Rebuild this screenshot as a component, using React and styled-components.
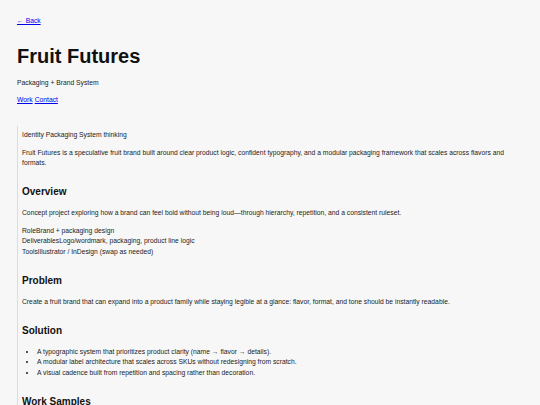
import React from 'react';
import styled, { createGlobalStyle } from 'styled-components';

const Global = createGlobalStyle`
  html, body {
    margin: 0;
    background: #f7f7f7;
  }
  body {
    font-family: "Liberation Sans", Arial, sans-serif;
    color: #1c1c1c;
    font-size: 6.75px;
    line-height: 10.5px;
  }
`;

const Page = styled.div`
  padding: 16px 17px 0;
`;

const NavLink = styled.a`
  color: #0000ee;
  text-decoration: underline;
`;

const Header = styled.header`
  display: flex;
  flex-direction: column;
`;

const Title = styled.h1`
  font-size: 20px;
  line-height: 24px;
  font-weight: 700;
  margin: 17px 0 10px;
  color: #111;
`;

const Subtitle = styled.p`
  margin: 0 0 6.5px;
`;

const Links = styled.nav`
  display: flex;
  gap: 2px;
`;

const Main = styled.main`
  margin-top: 21px;
  border-left: 1px solid #dcdcdc;
  padding: 4px 0 20px 4px;
`;

const Para = styled.p`
  margin: 0 0 7px;
`;

const Heading = styled.h2`
  font-size: 10px;
  line-height: 12px;
  font-weight: 700;
  margin: 17.5px 0 10px;
  color: #111;
`;

const Facts = styled.div`
  display: flex;
  flex-direction: column;
  margin: 0 0 7px;
`;

const Fact = styled.div``;

const List = styled.ul`
  margin: 0 0 7px;
  padding-left: 15px;
  list-style: disc;
`;

const facts = [
  ['Role', 'Brand + packaging design'],
  ['Deliverables', 'Logo/wordmark, packaging, product line logic'],
  ['Tools', 'Illustrator / InDesign (swap as needed)'],
];

const solution = [
  'A typographic system that prioritizes product clarity (name → flavor → details).',
  'A modular label architecture that scales across SKUs without redesigning from scratch.',
  'A visual cadence built from repetition and spacing rather than decoration.',
];

export default function App() {
  return (
    <>
      <Global />
      <Page>
        <Header>
          <div><NavLink href="#">← Back</NavLink></div>
          <Title>Fruit Futures</Title>
          <Subtitle>Packaging + Brand System</Subtitle>
          <Links>
            <NavLink href="#">Work</NavLink>
            <NavLink href="#">Contact</NavLink>
          </Links>
        </Header>
        <Main>
          <Para>Identity Packaging System thinking</Para>
          <Para>
            Fruit Futures is a speculative fruit brand built around clear product logic, confident typography, and a
            modular packaging framework that scales across flavors and formats.
          </Para>

          <Heading>Overview</Heading>
          <Para>
            Concept project exploring how a brand can feel bold without being loud—through hierarchy, repetition, and a
            consistent ruleset.
          </Para>
          <Facts>
            {facts.map(([k, v]) => (
              <Fact key={k}>
                <span>{k}</span>
                <span>{v}</span>
              </Fact>
            ))}
          </Facts>

          <Heading>Problem</Heading>
          <Para>
            Create a fruit brand that can expand into a product family while staying legible at a glance: flavor, format,
            and tone should be instantly readable.
          </Para>

          <Heading>Solution</Heading>
          <List>
            {solution.map((s) => (
              <li key={s}>{s}</li>
            ))}
          </List>

          <Heading>Work Samples</Heading>
        </Main>
      </Page>
    </>
  );
}
